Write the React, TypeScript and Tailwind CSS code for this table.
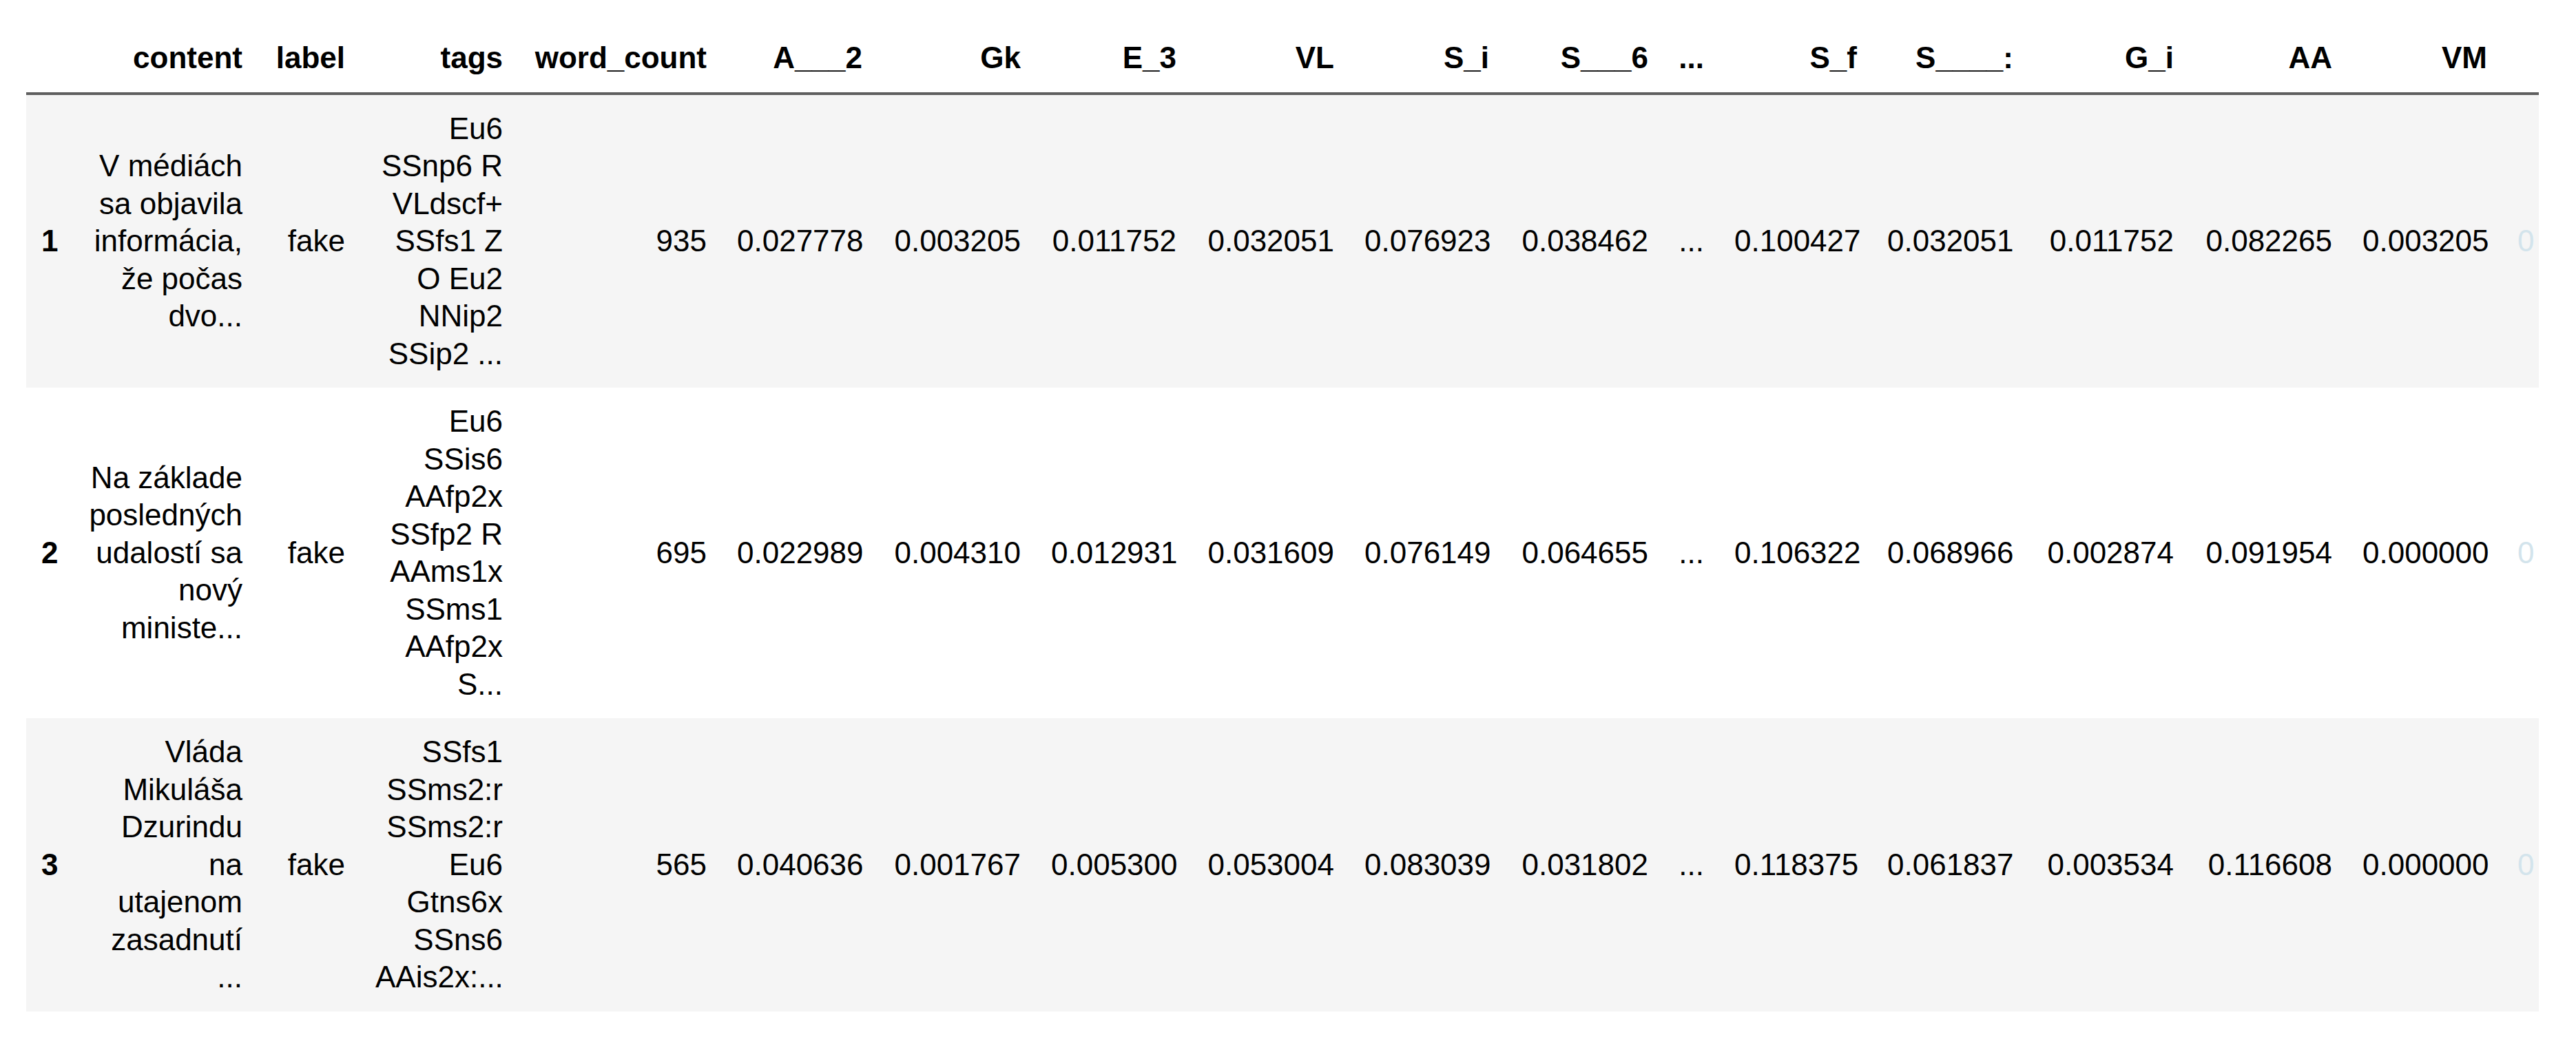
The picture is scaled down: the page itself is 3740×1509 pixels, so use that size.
import React from 'react';

type Row = {
  idx: string;
  content: string[];
  label: string;
  tags: string[];
  wordCount: string;
  values: string[];
};

// header names and fixed widths, right edges taken from the notebook output
const columns: { name: string; w: string }[] = [
  { name: 'content', w: 'w-[274px]' },
  { name: 'label', w: 'w-[149px]' },
  { name: 'tags', w: 'w-[229px]' },
  { name: 'word_count', w: 'w-[296px]' },
  { name: 'A___2', w: 'w-[226px]' },
  { name: 'Gk', w: 'w-[230px]' },
  { name: 'E_3', w: 'w-[226px]' },
  { name: 'VL', w: 'w-[229px]' },
  { name: 'S_i', w: 'w-[225px]' },
  { name: 'S___6', w: 'w-[231px]' },
  { name: '...', w: 'w-[81px]' },
  { name: 'S_f', w: 'w-[222px]' },
  { name: 'S____:', w: 'w-[227px]' },
  { name: 'G_i', w: 'w-[233px]' },
  { name: 'AA', w: 'w-[230px]' },
  { name: 'VM', w: 'w-[225px]' },
];

const rows: Row[] = [
  {
    idx: '1',
    content: ['V médiách', 'sa objavila', 'informácia,', 'že počas', 'dvo...'],
    label: 'fake',
    tags: ['Eu6', 'SSnp6 R', 'VLdscf+', 'SSfs1 Z', 'O Eu2', 'NNip2', 'SSip2 ...'],
    wordCount: '935',
    values: ['0.027778', '0.003205', '0.011752', '0.032051', '0.076923', '0.038462', '...', '0.100427', '0.032051', '0.011752', '0.082265', '0.003205'],
  },
  {
    idx: '2',
    content: ['Na základe', 'posledných', 'udalostí sa', 'nový', 'ministe...'],
    label: 'fake',
    tags: ['Eu6', 'SSis6', 'AAfp2x', 'SSfp2 R', 'AAms1x', 'SSms1', 'AAfp2x', 'S...'],
    wordCount: '695',
    values: ['0.022989', '0.004310', '0.012931', '0.031609', '0.076149', '0.064655', '...', '0.106322', '0.068966', '0.002874', '0.091954', '0.000000'],
  },
  {
    idx: '3',
    content: ['Vláda', 'Mikuláša', 'Dzurindu', 'na', 'utajenom', 'zasadnutí', '...'],
    label: 'fake',
    tags: ['SSfs1', 'SSms2:r', 'SSms2:r', 'Eu6', 'Gtns6x', 'SSns6', 'AAis2x:...'],
    wordCount: '565',
    values: ['0.040636', '0.001767', '0.005300', '0.053004', '0.083039', '0.031802', '...', '0.118375', '0.061837', '0.003534', '0.116608', '0.000000'],
  },
];

const cell = 'px-[22px] py-[22px] text-right align-middle whitespace-nowrap';
// sliver of the next column, scrolled out of view
const edge = 'pl-[22px] pr-0 py-[22px] text-left align-middle whitespace-nowrap w-[53px]';

const Lines: React.FC<{ items: string[] }> = ({ items }) => (
  <>
    {items.map((l, k) => (
      <span key={k} className="block">
        {l}
      </span>
    ))}
  </>
);

const App: React.FC = () => {
  return (
    <div className="min-h-screen bg-white pl-[38px] pt-[35px] text-black font-['Liberation_Sans',Arial,sans-serif] text-[44px] leading-[54.5px]">
      <div className="w-[3648px] overflow-hidden">
        <table className="table-fixed border-collapse w-[3648px]">
          <thead>
            <tr className="border-b-4 border-[#5f5f5f]">
              <th className={`${cell} w-[62px] align-bottom`} />
              {columns.map(c => (
                <th key={c.name} className={`${cell} ${c.w} align-bottom font-bold`}>
                  {c.name}
                </th>
              ))}
              <th className={edge} />
            </tr>
          </thead>
          <tbody>
            {rows.map((r, i) => (
              <tr key={r.idx} className={i % 2 === 0 ? 'bg-[#f5f5f5]' : 'bg-white'}>
                <th className={`${cell} font-bold`}>{r.idx}</th>
                <td className={cell}>
                  <Lines items={r.content} />
                </td>
                <td className={cell}>{r.label}</td>
                <td className={cell}>
                  <Lines items={r.tags} />
                </td>
                <td className={cell}>{r.wordCount}</td>
                {r.values.map((v, k) => (
                  <td key={k} className={cell}>
                    {v}
                  </td>
                ))}
                <td className={`${edge} text-[#d3e4ec]`}>0</td>
              </tr>
            ))}
          </tbody>
        </table>
      </div>
    </div>
  );
};

export default App;
